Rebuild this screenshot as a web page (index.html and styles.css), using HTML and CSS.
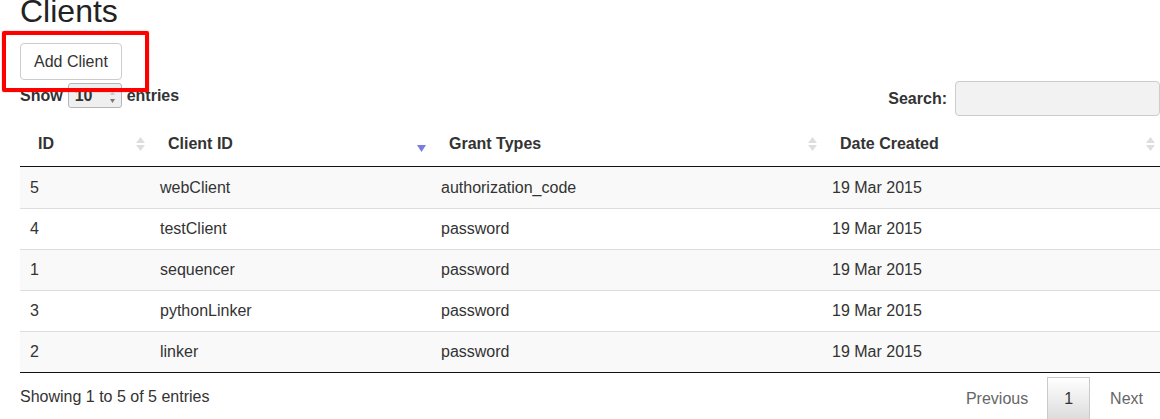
FILE: index.html
```html
<!DOCTYPE html>
<html>
<head>
<meta charset="utf-8">
<link rel="stylesheet" href="styles.css">
</head>
<body>
<h1 class="title">Clients</h1>
<button class="btn">Add Client</button>
<div class="controls">
  <div class="length">
    <span>Show</span>
    <span class="select"><span class="select-val">10</span>
      <svg class="select-arrows" width="7" height="14" viewBox="0 0 7 14"><path d="M3.5 1 L6 5 L1 5 Z" fill="#ccc"/><path d="M1 9 L6 9 L3.5 13 Z" fill="#777"/></svg>
    </span>
    <span>entries</span>
  </div>
  <div class="search">
    <span>Search:</span>
    <span class="search-input"></span>
  </div>
</div>
<table class="grid">
  <colgroup>
    <col class="c1"><col class="c2"><col class="c3"><col class="c4">
  </colgroup>
  <thead>
    <tr>
      <th>ID<span class="sort"><svg width="9" height="15" viewBox="0 0 9 15"><path d="M4.5 0 L9 6 L0 6 Z" fill="#dedede"/><path d="M0 8 L9 8 L4.5 14 Z" fill="#dedede"/></svg></span></th>
      <th>Client ID<span class="sort"><svg width="9" height="15" viewBox="0 0 9 15"><path d="M0 8 L9 8 L4.5 15 Z" fill="#7b7be0"/></svg></span></th>
      <th>Grant Types<span class="sort"><svg width="9" height="15" viewBox="0 0 9 15"><path d="M4.5 0 L9 6 L0 6 Z" fill="#dedede"/><path d="M0 8 L9 8 L4.5 14 Z" fill="#dedede"/></svg></span></th>
      <th>Date Created<span class="sort"><svg width="9" height="15" viewBox="0 0 9 15"><path d="M4.5 0 L9 6 L0 6 Z" fill="#dedede"/><path d="M0 8 L9 8 L4.5 14 Z" fill="#dedede"/></svg></span></th>
    </tr>
  </thead>
  <tbody>
    <tr><td>5</td><td>webClient</td><td>authorization_code</td><td>19 Mar 2015</td></tr>
    <tr><td>4</td><td>testClient</td><td>password</td><td>19 Mar 2015</td></tr>
    <tr><td>1</td><td>sequencer</td><td>password</td><td>19 Mar 2015</td></tr>
    <tr><td>3</td><td>pythonLinker</td><td>password</td><td>19 Mar 2015</td></tr>
    <tr><td>2</td><td>linker</td><td>password</td><td>19 Mar 2015</td></tr>
  </tbody>
</table>
<div class="footer">
  <div class="info">Showing 1 to 5 of 5 entries</div>
  <div class="pager">
    <span class="pg prev">Previous</span>
    <span class="pg current">1</span>
    <span class="pg next">Next</span>
  </div>
</div>
<div class="highlight"></div>
</body>
</html>
```

FILE: styles.css
```css
html, body {
  margin: 0;
  padding: 0;
}
body {
  position: relative;
  padding: 0 0 0 20px;
  width: 1140px;
  font-family: "Liberation Sans", Arial, sans-serif;
  font-size: 16px;
  line-height: 21px;
  color: #333;
  background: #fff;
  overflow: hidden;
  height: 419px;
}
.title {
  margin: -6px 0 14px 0;
  font-size: 32px;
  line-height: 35px;
  font-weight: normal;
  color: #222;
}
.btn {
  display: block;
  font-family: inherit;
  font-size: 16px;
  line-height: 21px;
  color: #333;
  background: #fff;
  border: 1px solid #ccc;
  border-radius: 4px;
  padding: 7px 13px;
  margin: 0;
}
.controls {
  display: flex;
  justify-content: space-between;
  align-items: flex-start;
  margin-top: 1px;
  height: 35px;
}
.length {
  display: flex;
  align-items: center;
  height: 27px;
  margin-top: 1px;
  font-weight: bold;
}
.select {
  display: inline-flex;
  align-items: center;
  justify-content: space-between;
  box-sizing: border-box;
  width: 54px;
  height: 25px;
  margin: 0 5px 0 5px;
  padding: 0 5px 0 6px;
  background: #efefef;
  border: 1px solid #b5b5b5;
  border-radius: 3px;
  font-weight: bold;
}
.select-arrows {
  margin-top: 2px;
}
.search {
  display: flex;
  align-items: center;
  height: 35px;
  font-weight: bold;
}
.search-input {
  display: block;
  box-sizing: border-box;
  width: 205px;
  height: 35px;
  margin-left: 8px;
  background: #f2f2f2;
  border: 1px solid #ccc;
  border-radius: 4px;
}
.grid {
  width: 1140px;
  border-collapse: collapse;
  table-layout: fixed;
  margin-top: 5px;
}
.c1 { width: 130px; }
.c2 { width: 281px; }
.c3 { width: 391px; }
.c4 { width: 338px; }
.grid th {
  position: relative;
  text-align: left;
  font-weight: bold;
  padding: 12px 18px 12px 18px;
  border-bottom: 1px solid #111;
}
.grid td {
  padding: 10px 10px;
  line-height: 20px;
  border-top: 1px solid #ddd;
}
.grid tbody tr:first-child td {
  border-top: none;
  padding-top: 11px;
}
.grid tbody tr:nth-child(odd) {
  background: #f9f9f9;
}
.grid tbody tr:last-child td {
  border-bottom: 1px solid #111;
}
.sort {
  position: absolute;
  right: 5px;
  top: 16px;
  width: 9px;
  height: 15px;
  line-height: 0;
}
.footer {
  display: flex;
  justify-content: space-between;
  align-items: flex-start;
}
.info {
  padding-top: 13px;
}
.pager {
  display: flex;
  margin-top: 4px;
}
.pg {
  display: block;
  padding: 10px 17px;
  color: #666;
  border: 1px solid transparent;
}
.pg.current {
  margin-left: 1px;
  padding: 10px 16px;
  color: #333;
  border: 1px solid #cacaca;
  background: linear-gradient(to bottom, #ffffff 0%, #dcdcdc 100%);
}
.pg.next {
  margin-left: 2px;
  padding-right: 16px;
}
.highlight {
  position: absolute;
  left: 2px;
  top: 31px;
  width: 139px;
  height: 53px;
  border: 4px solid #ff0000;
  border-radius: 2px;
  box-shadow: 0 0 1px #ff0000;
}
```
